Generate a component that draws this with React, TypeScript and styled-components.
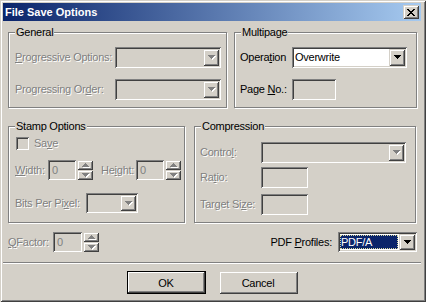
import React from 'react';
import styled, { createGlobalStyle, css } from 'styled-components';

const FACE = '#D4D0C8';
const SHADOW = '#808080';
const DARK = '#404040';
const LIGHT = '#FFFFFF';

const Global = createGlobalStyle`
  html, body { margin: 0; padding: 0; background: ${FACE}; }
  body { font-family: "Liberation Sans", Arial, sans-serif; font-size: 11px; color: #000; letter-spacing: -0.25px; }
  * { box-sizing: border-box; }
`;

const raised = css`
  background: ${FACE};
  box-shadow: inset 1px 1px ${FACE}, inset -1px -1px ${DARK}, inset 2px 2px ${LIGHT}, inset -2px -2px ${SHADOW};
`;

const sunken = css`
  box-shadow: inset 1px 1px ${SHADOW}, inset -1px -1px ${LIGHT}, inset 2px 2px ${DARK}, inset -2px -2px ${FACE};
`;

const Window = styled.div`
  width: 426px;
  height: 302px;
  background: ${FACE};
  padding: 3px 5px 3px 3px;
  display: flex;
  flex-direction: column;
  box-shadow: inset 1px 1px ${FACE}, inset -1px -1px ${DARK}, inset 2px 2px ${LIGHT}, inset -2px -2px ${SHADOW};
`;

const TitleBar = styled.div`
  height: 18px;
  flex: none;
  display: flex;
  align-items: center;
  justify-content: space-between;
  padding: 0 2px 0 2px;
  background: linear-gradient(to right, #0a246a, #a6caf0);
  color: #fff;
  font-weight: 700;
  font-size: 11px;
  letter-spacing: 0;
`;

const TitleText = styled.span`
  line-height: 13px;
  white-space: nowrap;
`;

const CloseButton = styled.div`
  width: 16px;
  height: 14px;
  ${raised};
  display: flex;
  align-items: center;
  justify-content: center;
  padding-right: 1px;
`;

const Body = styled.div`
  flex: 1;
  display: flex;
  flex-direction: column;
  padding: 11px 0 0 5px;
`;

const Row = styled.div<{ $gap: number; $mt?: number }>`
  display: flex;
  gap: ${(p) => p.$gap}px;
  margin-top: ${(p) => p.$mt ?? 0}px;
`;

const GroupBox = styled.div<{ $w: number; $h: number }>`
  position: relative;
  width: ${(p) => p.$w}px;
  height: ${(p) => p.$h}px;
  border: 1px solid ${SHADOW};
  box-shadow: inset 1px 1px ${LIGHT}, 1px 1px ${LIGHT};
`;

const GroupCaption = styled.span`
  position: absolute;
  top: -7px;
  left: 6px;
  padding: 0 1px;
  background: ${FACE};
  line-height: 13px;
  white-space: nowrap;
`;

const GroupContent = styled.div<{ $pt: number; $pl: number }>`
  display: flex;
  flex-direction: column;
  padding: ${(p) => p.$pt}px 0 0 ${(p) => p.$pl}px;
`;

const FieldRow = styled.div<{ $h: number; $mt?: number }>`
  display: flex;
  align-items: center;
  height: ${(p) => p.$h}px;
  margin-top: ${(p) => p.$mt ?? 0}px;
`;

const Label = styled.span<{ $w?: number; $disabled?: boolean; $ml?: number }>`
  flex: none;
  width: ${(p) => (p.$w ? `${p.$w}px` : 'auto')};
  margin-left: ${(p) => p.$ml ?? 0}px;
  white-space: nowrap;
  line-height: 13px;
  color: ${(p) => (p.$disabled ? SHADOW : '#000')};
  text-shadow: ${(p) => (p.$disabled ? `1px 1px 0 ${LIGHT}` : 'none')};
`;

const Key = styled.span`
  text-decoration: underline;
`;

const Combo = styled.div<{ $w: number; $h: number; $enabled?: boolean }>`
  flex: none;
  width: ${(p) => p.$w}px;
  height: ${(p) => p.$h}px;
  padding: 2px;
  display: flex;
  background: ${(p) => (p.$enabled ? '#fff' : FACE)};
  ${sunken};
`;

const ComboText = styled.div`
  flex: 1;
  display: flex;
  align-items: center;
  padding-left: 1px;
  line-height: 13px;
  white-space: nowrap;
  overflow: hidden;
`;

const Selected = styled.span`
  flex: 1;
  align-self: stretch;
  margin: 1px 1px 1px 0;
  padding-left: 1px;
  display: flex;
  align-items: center;
  background: #0a246a;
  color: #fff;
  outline: 1px dotted #d8d8a0;
  outline-offset: -1px;
`;

const DropButton = styled.div`
  flex: none;
  width: 16px;
  ${raised};
  display: flex;
  align-items: center;
  justify-content: center;
`;

const Edit = styled.div<{ $w: number; $h: number }>`
  flex: none;
  width: ${(p) => p.$w}px;
  height: ${(p) => p.$h}px;
  background: ${FACE};
  ${sunken};
  display: flex;
  align-items: center;
  padding-left: 4px;
  color: ${SHADOW};
  line-height: 13px;
`;

const Spin = styled.div<{ $h: number }>`
  flex: none;
  width: 16px;
  height: ${(p) => p.$h}px;
  margin-left: 1px;
  display: flex;
  flex-direction: column;
`;

const SpinButton = styled.div`
  flex: 1;
  ${raised};
  display: flex;
  align-items: center;
  justify-content: center;
`;

const CheckBox = styled.div`
  flex: none;
  width: 13px;
  height: 13px;
  margin-left: 1px;
  background: ${FACE};
  ${sunken};
`;

const Separator = styled.div`
  height: 2px;
  margin: 10px 0 0 -5px;
  border-top: 1px solid ${SHADOW};
  border-bottom: 1px solid ${LIGHT};
`;

const BottomRow = styled.div`
  display: flex;
  justify-content: center;
  gap: 13px;
  margin: 7px 0 0 -5px;
`;

const PushButton = styled.div<{ $default?: boolean }>`
  width: 79px;
  height: 23px;
  display: flex;
  align-items: center;
  justify-content: center;
  background: ${FACE};
  ${(p) =>
    p.$default
      ? css`
          border: 1px solid #000;
          box-shadow: inset -1px -1px ${DARK}, inset 1px 1px ${LIGHT}, inset -2px -2px ${SHADOW};
        `
      : css`
          box-shadow: inset 1px 1px ${FACE}, inset -1px -1px ${DARK}, inset 2px 2px ${LIGHT},
            inset -2px -2px ${SHADOW};
        `}
`;

const BottomFields = styled.div`
  width: 409px;
  height: 20px;
  margin-top: 9px;
  display: flex;
  align-items: center;
  justify-content: space-between;
`;

const Inline = styled.div`
  display: flex;
  align-items: center;
`;

const DOWN = 'M0 0h7v1H0zM1 1h5v1H1zM2 2h3v1H2zM3 3h1v1H3z';
const UP = 'M3 0h1v1H3zM2 1h3v1H2zM1 2h5v1H1zM0 3h7v1H0z';

const ArrowIcon = ({ d, disabled }: { d: string; disabled?: boolean }) => (
  <svg width="8" height="5" viewBox="0 0 8 5" shapeRendering="crispEdges" style={{ display: 'block', marginLeft: 1 }}>
    {disabled && <path d={d} transform="translate(1,1)" fill={LIGHT} />}
    <path d={d} fill={disabled ? SHADOW : '#000'} />
  </svg>
);

const CloseGlyph = () => (
  <svg width="8" height="7" viewBox="0 0 8 7" shapeRendering="crispEdges" style={{ display: 'block' }}>
    <path
      d="M0 0h2v1H0zM6 0h2v1H6zM1 1h2v1H1zM5 1h2v1H5zM2 2h4v1H2zM3 3h2v1H3zM2 4h4v1H2zM1 5h2v1H1zM5 5h2v1H5zM0 6h2v1H0zM6 6h2v1H6z"
      fill="#000"
    />
  </svg>
);

const ComboBox = ({ w, h, enabled, children }: { w: number; h: number; enabled?: boolean; children?: React.ReactNode }) => (
  <Combo $w={w} $h={h} $enabled={enabled}>
    <ComboText>{children}</ComboText>
    <DropButton>
      <ArrowIcon d={DOWN} disabled={!enabled} />
    </DropButton>
  </Combo>
);

const SpinEdit = ({ w, h }: { w: number; h: number }) => (
  <>
    <Edit $w={w} $h={h}>0</Edit>
    <Spin $h={h}>
      <SpinButton>
        <ArrowIcon d={UP} disabled />
      </SpinButton>
      <SpinButton>
        <ArrowIcon d={DOWN} disabled />
      </SpinButton>
    </Spin>
  </>
);

export default function App() {
  return (
    <>
      <Global />
      <Window>
        <TitleBar>
          <TitleText>File Save Options</TitleText>
          <CloseButton>
            <CloseGlyph />
          </CloseButton>
        </TitleBar>
        <Body>
          <Row $gap={7}>
            <GroupBox $w={219} $h={76}>
              <GroupCaption>General</GroupCaption>
              <GroupContent $pt={14} $pl={6}>
                <FieldRow $h={21}>
                  <Label $w={100} $disabled>
                    <Key>P</Key>rogressive Options:
                  </Label>
                  <ComboBox w={106} h={21} />
                </FieldRow>
                <FieldRow $h={21} $mt={11}>
                  <Label $w={100} $disabled>
                    Progressing Or<Key>d</Key>er:
                  </Label>
                  <ComboBox w={106} h={21} />
                </FieldRow>
              </GroupContent>
            </GroupBox>
            <GroupBox $w={183} $h={76}>
              <GroupCaption>Multipage</GroupCaption>
              <GroupContent $pt={14} $pl={5}>
                <FieldRow $h={21}>
                  <Label $w={52}>
                    Opera<Key>t</Key>ion
                  </Label>
                  <ComboBox w={115} h={21} enabled>
                    Overwrite
                  </ComboBox>
                </FieldRow>
                <FieldRow $h={21} $mt={11}>
                  <Label $w={52}>
                    Page <Key>N</Key>o.:
                  </Label>
                  <Edit $w={44} $h={21} />
                </FieldRow>
              </GroupContent>
            </GroupBox>
          </Row>
          <Row $gap={9} $mt={18}>
            <GroupBox $w={177} $h={97}>
              <GroupCaption>Stamp Options</GroupCaption>
              <GroupContent $pt={10} $pl={6}>
                <FieldRow $h={13}>
                  <CheckBox />
                  <Label $ml={5} $disabled>
                    Sa<Key>v</Key>e
                  </Label>
                </FieldRow>
                <FieldRow $h={20} $mt={10}>
                  <Label $w={33} $disabled>
                    <Key>W</Key>idth:
                  </Label>
                  <SpinEdit w={28} h={20} />
                  <Label $w={35} $ml={8} $disabled>
                    He<Key>i</Key>ght:
                  </Label>
                  <SpinEdit w={28} h={20} />
                </FieldRow>
                <FieldRow $h={20} $mt={13}>
                  <Label $w={71} $disabled>
                    Bits Per Pi<Key>x</Key>el:
                  </Label>
                  <ComboBox w={52} h={20} />
                </FieldRow>
              </GroupContent>
            </GroupBox>
            <GroupBox $w={222} $h={97}>
              <GroupCaption>Compression</GroupCaption>
              <GroupContent $pt={15} $pl={5}>
                <FieldRow $h={21}>
                  <Label $w={61} $disabled>
                    Contro<Key>l</Key>:
                  </Label>
                  <ComboBox w={145} h={21} />
                </FieldRow>
                <FieldRow $h={21} $mt={4}>
                  <Label $w={61} $disabled>
                    Ra<Key>t</Key>io:
                  </Label>
                  <Edit $w={47} $h={21} />
                </FieldRow>
                <FieldRow $h={21} $mt={6}>
                  <Label $w={61} $disabled>
                    Target Si<Key>z</Key>e:
                  </Label>
                  <Edit $w={47} $h={21} />
                </FieldRow>
              </GroupContent>
            </GroupBox>
          </Row>
          <BottomFields>
            <Inline>
              <Label $w={45} $disabled>
                <Key>Q</Key>Factor:
              </Label>
              <SpinEdit w={29} h={20} />
            </Inline>
            <Inline>
              <Label>
                PDF <Key>P</Key>rofiles:
              </Label>
              <Combo $w={79} $h={20} $enabled style={{ marginLeft: 6 }}>
                <Selected>PDF/A</Selected>
                <DropButton>
                  <ArrowIcon d={DOWN} />
                </DropButton>
              </Combo>
            </Inline>
          </BottomFields>
          <Separator />
          <BottomRow>
            <PushButton $default>OK</PushButton>
            <PushButton>Cancel</PushButton>
          </BottomRow>
        </Body>
      </Window>
    </>
  );
}
